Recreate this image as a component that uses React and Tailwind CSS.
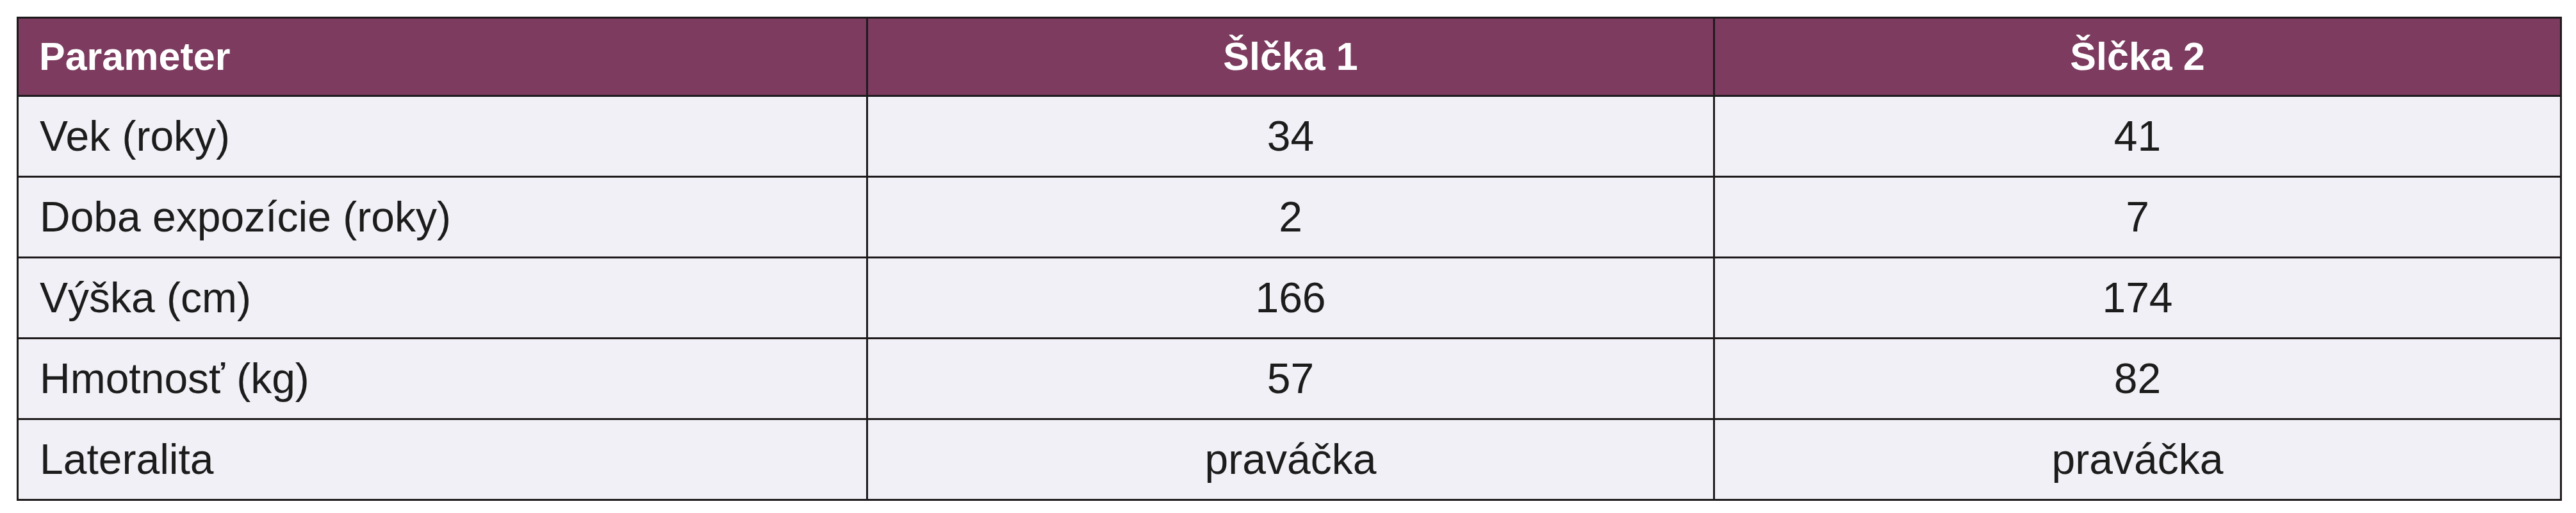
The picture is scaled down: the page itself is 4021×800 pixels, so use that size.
import React from "react";

const rows = [
  ["Vek (roky)", "34", "41"],
  ["Doba expozície (roky)", "2", "7"],
  ["Výška (cm)", "166", "174"],
  ["Hmotnosť (kg)", "57", "82"],
  ["Lateralita", "praváčka", "praváčka"],
];

function App() {
  return (
    <div className="bg-white w-[4021px] h-[800px] pt-[26px] pl-[26px] font-['Liberation_Sans',Arial,sans-serif]">
      <div className="grid grid-cols-[1323px_1319px_1319px] grid-rows-[119px_repeat(5,123px)] gap-[3px] p-[3px] bg-[#1e1a1c] w-[3973px]">
        <div className="bg-[#7c3b5f] text-white font-bold text-[61px] flex items-center pl-[32px]">
          Parameter
        </div>
        <div className="bg-[#7c3b5f] text-white font-bold text-[61px] flex items-center justify-center">
          Šlčka 1
        </div>
        <div className="bg-[#7c3b5f] text-white font-bold text-[61px] flex items-center justify-center">
          Šlčka 2
        </div>
        {rows.map((r) => (
          <React.Fragment key={r[0]}>
            <div className="bg-[#f1f0f6] text-[#1c1c1c] text-[66px] flex items-center pl-[33px]">
              {r[0]}
            </div>
            <div className="bg-[#f1f0f6] text-[#1c1c1c] text-[66px] flex items-center justify-center">
              {r[1]}
            </div>
            <div className="bg-[#f1f0f6] text-[#1c1c1c] text-[66px] flex items-center justify-center">
              {r[2]}
            </div>
          </React.Fragment>
        ))}
      </div>
    </div>
  );
}

export default App;
